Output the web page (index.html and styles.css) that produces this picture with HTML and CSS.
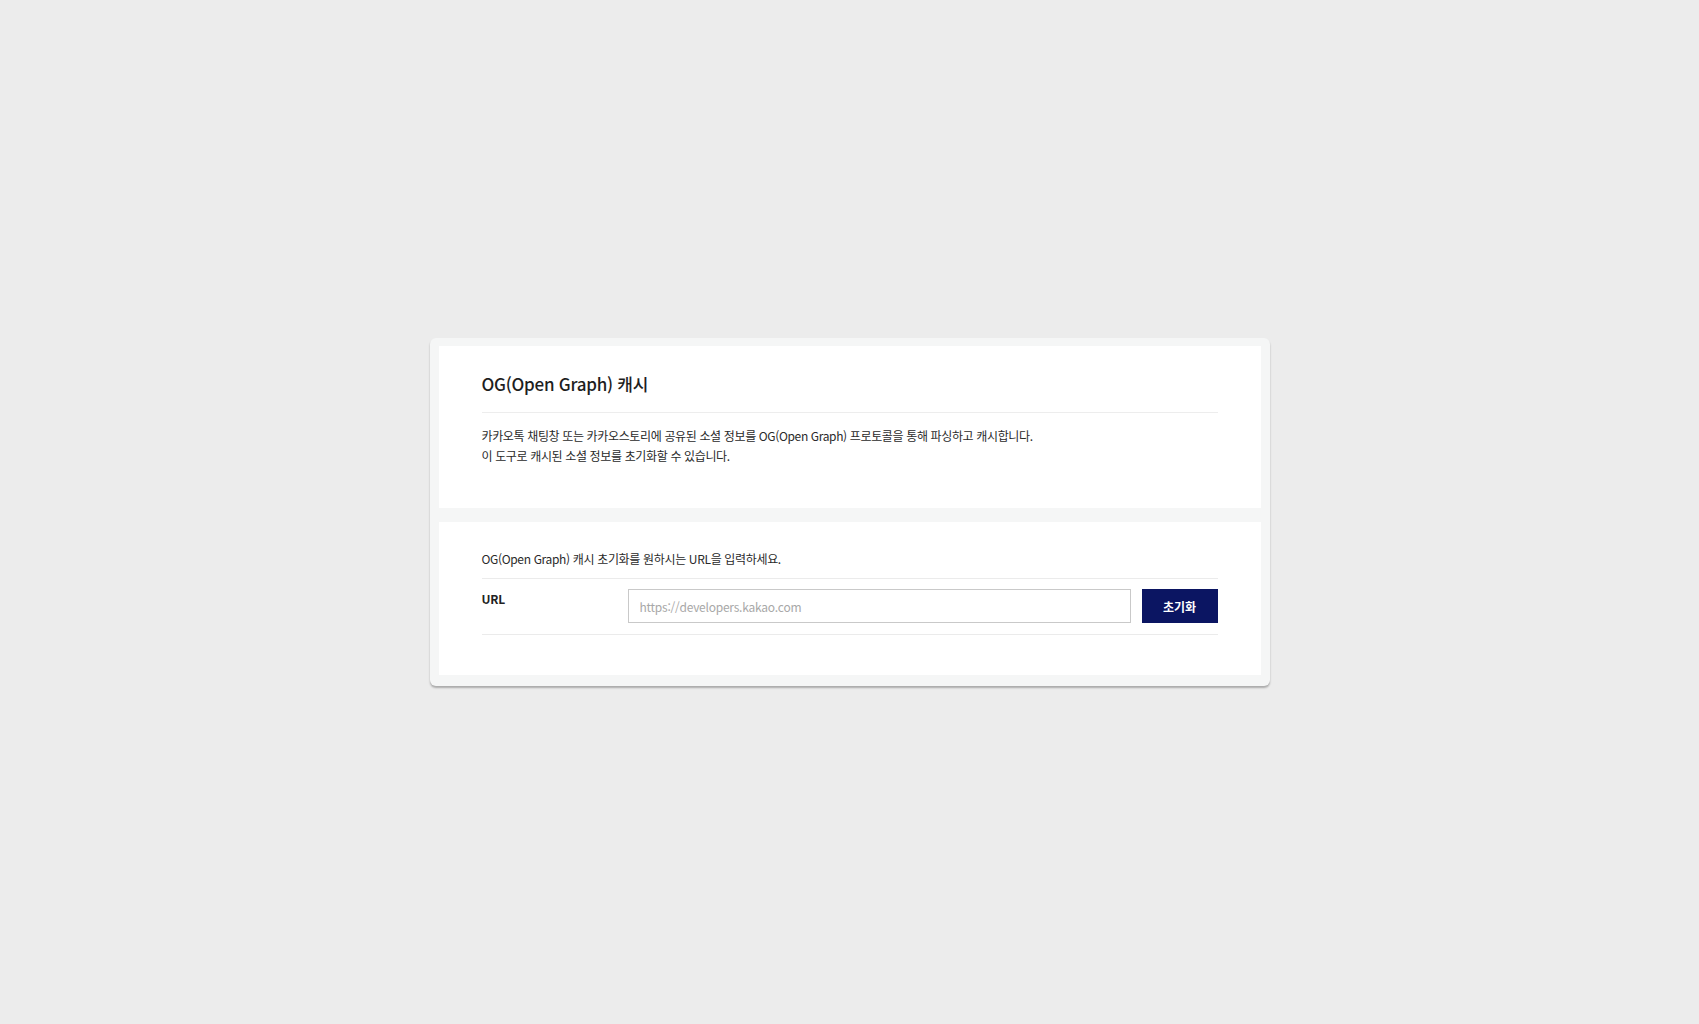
FILE: index.html
```html
<!DOCTYPE html>
<html lang="ko">
<head>
<meta charset="utf-8">
<title>OG(Open Graph) 캐시</title>
<link rel="stylesheet" href="styles.css">
</head>
<body>
<main class="page">
  <section class="card">
    <div class="panel panel-info">
      <h1 class="title">OG(Open Graph) 캐시</h1>
      <p class="desc">카카오톡 채팅창 또는 카카오스토리에 공유된 소셜 정보를 OG(Open Graph) 프로토콜을 통해 파싱하고 캐시합니다.<br>이 도구로 캐시된 소셜 정보를 초기화할 수 있습니다.</p>
    </div>
    <div class="panel panel-form">
      <p class="intro">OG(Open Graph) 캐시 초기화를 원하시는 URL을 입력하세요.</p>
      <div class="row">
        <label class="label" for="url">URL</label>
        <input class="input" id="url" type="text" placeholder="https://developers.kakao.com">
        <button class="btn" type="button">초기화</button>
      </div>
    </div>
  </section>
</main>
</body>
</html>
```
FILE: styles.css
```css
* { box-sizing: border-box; }
html, body {
  margin: 0;
  padding: 0;
  background: #ececec;
  font-family: "Noto Sans CJK KR", "Noto Sans", sans-serif;
  color: #222;
}
.page {
  min-height: 100vh;
  display: flex;
  align-items: center;
  justify-content: center;
}
.card {
  width: 840px;
  background: #f5f6f6;
  border-radius: 6px;
  padding: 8px 9px 11px;
  box-shadow: 0 2px 2px rgba(0, 0, 0, 0.28);
  display: flex;
  flex-direction: column;
  gap: 14px;
}
.panel {
  background: #fff;
  padding: 0 43px;
}
.panel-info {
  padding-top: 25px;
  padding-bottom: 42px;
}
.title {
  margin: 0;
  font-size: 17px;
  line-height: 26px;
  font-weight: 500;
  color: #1e1e1e;
  padding-bottom: 15px;
  border-bottom: 1px solid #ededed;
  letter-spacing: -0.25px;
}
.desc {
  margin: 13px 0 0;
  font-size: 12px;
  line-height: 20px;
  color: #2a2a2a;
  letter-spacing: -0.36px;
}
.panel-form {
  padding-top: 27px;
  padding-bottom: 40px;
}
.intro {
  margin: 0;
  padding-bottom: 9px;
  font-size: 12px;
  line-height: 20px;
  color: #2a2a2a;
  letter-spacing: -0.34px;
}
.row {
  display: flex;
  align-items: flex-start;
  border-top: 1px solid #ebebeb;
  border-bottom: 1px solid #ebebeb;
  padding: 10px 0 11px;
}
.label {
  width: 146px;
  flex: none;
  font-size: 12px;
  line-height: 20px;
  font-weight: 700;
  color: #222;
  margin-top: 0;
  letter-spacing: -0.2px;
}
.input {
  width: 503px;
  height: 34px;
  flex: none;
  border: 1px solid #c9c9c9;
  padding: 0 11px;
  font-family: inherit;
  font-size: 12px;
  letter-spacing: -0.24px;
  color: #333;
  outline: none;
  background: #fff;
}
.input::placeholder { color: #a8a8a8; }
.btn {
  margin-left: 11px;
  width: 76px;
  height: 34px;
  flex: none;
  border: 0;
  background: #0b1562;
  color: #fff;
  font-family: inherit;
  font-size: 12px;
  font-weight: 700;
  padding: 0;
}
```
